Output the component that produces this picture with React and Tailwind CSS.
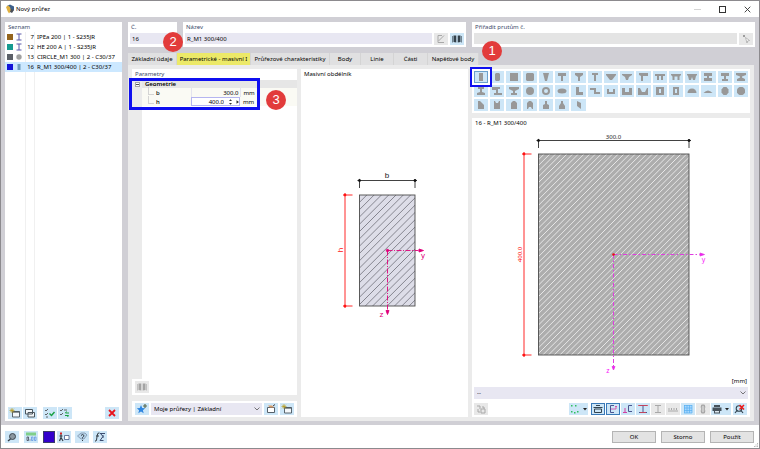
import { useState } from 'react';
import clsx from 'clsx';

const sections = [
  { id: 7, name: 'IPEa 200 | 1 - S235JR', color: 'bg-[#94641c]', shape: 'beam' },
  { id: 12, name: 'HE 200 A | 1 - S235JR', color: 'bg-[#159a90]', shape: 'beam' },
  { id: 13, name: 'CIRCLE_M1 300 | 2 - C30/37', color: 'bg-[#5c6068]', shape: 'circle' },
  { id: 16, name: 'R_M1 300/400 | 2 - C30/37', color: 'bg-[#1414d8]', shape: 'rect' },
];

const tabs = [
  { label: 'Základní údaje', width: 'w-[49px]' },
  { label: 'Parametrické - masivní I', width: 'w-[74px]' },
  { label: 'Průřezové charakteristiky', width: 'w-[79px]' },
  { label: 'Body', width: 'w-[31px]' },
  { label: 'Linie', width: 'w-[33px]' },
  { label: 'Části', width: 'w-[34px]' },
  { label: 'Napěťové body', width: 'w-[51px]' },
];

// Outlines of the parametric sections, drawn in a 14x12 box
const shapes = [
  ['Obdélník', 'M5 2h4v8H5z'],
  ['Zaoblený obdélník', 'M6 2h3l1 1v6l-1 1H6L5 9V3z'],
  ['Čtverec', 'M3 2h8v8H3z'],
  ['Zaoblený čtverec', 'M4 2h6l1 1v6l-1 1H4L3 9V3z'],
  ['Lichoběžník', 'M4 2h6L8 10H6z'],
  ['T', 'M3 2h8v3H8v5H6V5H3z'],
  ['T s náběhem', 'M3 2h8v2L8 6v4H6V6L3 4z'],
  ['T úzké', 'M4 2h6v2H8v6H6V4H4z'],
  ['T lichoběžník', 'M2 3h10v1L8 9H6L2 4z'],
  ['T lichoběžník s náběhem', 'M2 3h10v1L9 6 8 9H6L5 6 2 4z'],
  ['T jednostranné', 'M3 2h9v3H7v5H5V5L3 4z'],
  ['TT', 'M2 3h10v2h-2v4H8V5H6v4H4V5H2z'],
  ['TT s náběhem', 'M2 3h10v1l-1.500 1.500V9h-2V5.500h-3V9h-2V5.500L2 4z'],
  ['TT kónické', 'M2 3h10v1l-1 1-1 4H8L7 6 6 9H4L3 5 2 4z'],
  ['I', 'M3 2h8v3H8v2h3v3H3V7h3V5H3z'],
  ['I úzké', 'M3 2h8v3H8v3h2v2H4V8h2V5H3z'],
  ['I s náběhem', 'M2 2h10v2L8 5.500v1L11 8v2H3V8l3-1.500v-1L2 4z'],
  ['I dole', 'M4 2h6v2H8v3l3 1v2H3V8l3-1V4H4z'],
  ['I jednostranné', 'M2 2h8v2H8v4h4v2H4V8h2V5H2z'],
  ['I nahoře', 'M2 2h10v2L8 6v2h2v2H4V8h2V6L2 4z'],
  ['Kruh', 'M7 2a4 4 0 1 1 0 8a4 4 0 1 1 0-8z'],
  ['Trubka', 'M7 2a4 4 0 1 1 0 8a4 4 0 1 1 0-8zM7 4a2 2 0 1 0 0 4a2 2 0 1 0 0-4z'],
  ['Elipsa', 'M7 3.500a4.500 2.500 0 1 1 0 5a4.500 2.500 0 1 1 0-5z'],
  ['L', 'M4 2h3v5h4v3H4z'],
  ['Z', 'M2 3h6v4h4v2H6V5H2z'],
  ['U nízké', 'M3 4h2v3h4V4h2v5H3z'],
  ['U', 'M2 3h3v4h4V3h3v7H2z'],
  ['U kónické', 'M2 3h2l2 4h3l2-4h1v7H2z'],
  ['Truhlík', 'M3 2h8v8H3zM6 4v4h2V4z'],
  ['Dutý obdélník', 'M4 2h6v8H4zM6 4v4h2V4z'],
  ['Půlkruh', 'M2.500 8a4.500 4.500 0 0 1 9 0z'],
  ['Úseč', 'M2.500 8q4.500-5 9 0z'],
  ['Osmiúhelník', 'M5.500 2h3l2 2.500v3l-2 2.500h-3l-2-2.500v-3z'],
  ['Mnohoúhelník', 'M5.500 2h3L10 3l1 1.500v3L10 9l-1.500 1h-3L4 9 3 7.500v-3L4 3z'],
  ['Zkosený obdélník', 'M4 2h2l4 4v4H4z'],
  ['Vybraný obdélník', 'M4 2h1l1 2h2l1-2h1v8H4z'],
  ['Zaoblený nahoře', 'M5 3l1-1h2l1 1 1 1v6H4V4z'],
  ['Oblouk', 'M4 4l2-2h2l2 2v6H9L8 8H6l-1 2H4z'],
  ['Sloup', 'M6 2h2v3l2 1v4H4V6l2-1z'],
  ['Sloup s náběhem', 'M6 2h2v2l2 3v3H4V7l2-3z'],
  ['Kosodélník', 'M5 2l4 2v6L5 7z'],
];

const blue = 'bg-[#cde6f7]';
const grey = 'bg-[#e8e8e8]';

const IconButton = ({ label, children, tone = blue, className }) => (
  <button
    type="button"
    aria-label={label}
    title={label}
    className={clsx('flex h-3 w-3.5 shrink-0 items-center justify-center', tone, className)}
  >
    <svg viewBox="0 0 14 12" className="h-3 w-3.5" fill="none" aria-hidden="true">
      {children}
    </svg>
  </button>
);

const Callout = ({ children, className }) => (
  <span
    className={clsx(
      'absolute z-20 flex size-5 items-center justify-center rounded-full bg-[#e23b3b] font-["Liberation_Sans",sans-serif] text-[13px] text-white',
      className,
    )}
  >
    {children}
  </span>
);

const Star = () => (
  <path d="M4 1v5M1.500 3.500h5M2.200 1.700l3.600 3.600M5.800 1.700L2.200 5.300" stroke="#b89b1c" strokeWidth=".7" />
);

const NewIcon = () => (
  <>
    <path d="M4.500 4.500h7v5.500h-7z" fill="#f4f8fb" stroke="#4a565e" strokeWidth=".9" />
    <path d="M4.500 5h7" stroke="#4a565e" strokeWidth="1.200" />
    <Star />
  </>
);

const BookIcon = ({ color = '#33414c' }) => (
  <>
    <path d="M3.500 2.500h2.800v7L3.500 9zM10.500 2.500H7.700v7l2.800-.5z" fill={color} />
    <path d="M2.500 3v6.500M11.500 3v6.500" stroke={color} strokeWidth=".6" />
  </>
);

const SectionGlyph = ({ shape }) => (
  <svg viewBox="0 0 8 8" className="size-2 shrink-0" aria-hidden="true">
    {shape === 'beam' && <path d="M1.500 1h5M1.500 7h5M4 1v6" stroke="#5a58a8" fill="none" />}
    {shape === 'circle' && <circle cx="4" cy="4" r="2.700" fill="#a0a0a0" />}
    {shape === 'rect' && <path d="M2.500 1h3v6h-3z" fill="#6f9dbd" />}
  </svg>
);

const SectionList = () => {
  const [selected, setSelected] = useState(16);

  return (
    <aside className="flex w-[117px] shrink-0 flex-col bg-white">
      <h2 className="h-2.5 px-[3px] text-[#3b4a6b]">Seznam</h2>
      <div className="relative flex flex-1 flex-col">
        <div className="absolute inset-y-0 left-5 w-[10px] border-x border-[#f0f0f0]" />
        <ul className="relative">
          {sections.map((s) => (
            <li key={s.id}>
              <button
                type="button"
                onClick={() => setSelected(s.id)}
                className={clsx('flex h-2.5 w-full items-center pl-0.5 text-left', selected === s.id && 'bg-[#cce8ff]')}
              >
                <span className={clsx('mr-0.5 size-1.5 shrink-0', s.color)} />
                <SectionGlyph shape={s.shape} />
                <span className="w-[11px] shrink-0 text-right">{s.id}</span>
                <span className="pl-[3px] whitespace-nowrap">{s.name}</span>
              </button>
            </li>
          ))}
        </ul>
      </div>
      <div className="flex gap-px bg-white px-[3px] py-0.5">
        <IconButton label="Nový"><NewIcon /></IconButton>
        <IconButton label="Kopírovat">
          <path d="M2.500 2.500h7v4.500h-7zM5 5.500h6.500V10H5z" fill="#f4f8fb" stroke="#4a565e" />
        </IconButton>
        <IconButton label="Vybrat vše" className="ml-[5px]">
          <path d="M2 3l1 1 2-2M2 7l1 1 2-2M3 10h2" stroke="#444" strokeWidth=".8" />
          <path d="M6.500 6.500l2 2 3-3.500" stroke="#18a040" strokeWidth="1.400" />
        </IconButton>
        <IconButton label="Obrátit výběr">
          <path d="M2 3l1 1 2-2M2 7l1 1 2-2M6 3h3" stroke="#444" strokeWidth=".8" />
          <path d="M11 6H7.500l1-1.500M7 8.500h3.500l-1 1.500" stroke="#18a040" />
        </IconButton>
        <IconButton label="Smazat" className="ml-auto">
          <path d="M4 3l6 6M10 3L4 9" stroke="#e8141c" strokeWidth="1.800" />
        </IconButton>
      </div>
    </aside>
  );
};

const Branch = () => <span className="-mt-1 h-2 w-1.5 border-b border-l border-[#d4d4d4]" />;

const Parameters = () => (
  <div className="flex min-h-0 flex-1 flex-col bg-white">
    <h2 className="h-[11px] px-[3px] text-[#3b4a6b]">Parametry</h2>
    <div className="relative flex flex-1 flex-col">
      <div className="flex flex-1">
        <div className="w-2.5 shrink-0 bg-[#ebebeb]">
          <button
            type="button"
            aria-label="Sbalit"
            className="mt-0.5 ml-[3px] flex size-[5px] items-center justify-center border border-[#a8a8a8] bg-white"
          >
            <span className="h-px w-[3px] bg-[#555]" />
          </button>
        </div>
        <table className="h-[26px] w-full border-collapse leading-2">
          <tbody>
            <tr className="h-2 bg-[#e6e6e6]">
              <th colSpan={3} className="p-0 pl-[3px] text-left font-semibold">Geometrie</th>
            </tr>
            <tr className="h-[9px] bg-[#fafaf4]">
              <th className="w-[49px] p-0 text-left font-medium">
                <label htmlFor="param-b" className="ml-1.5 flex items-center gap-0.5">
                  <Branch />b
                </label>
              </th>
              <td className="w-[49px] border-x border-[#e4e4ee] p-0">
                <input id="param-b" defaultValue="300.0" className="block h-2 w-full bg-transparent pr-px text-right outline-none" />
              </td>
              <td className="p-0 pl-[3px]">mm</td>
            </tr>
            <tr className="h-[9px] bg-[#fafaf4]">
              <th className="p-0 text-left font-medium">
                <label htmlFor="param-h" className="ml-1.5 flex items-center gap-0.5">
                  <Branch />h
                </label>
              </th>
              <td className="bg-white p-0 ring-1 ring-[#b5b5f0] ring-inset">
                <div className="flex items-center">
                  <input id="param-h" defaultValue="400.0" className="block h-2 w-8 min-w-0 flex-1 bg-transparent text-right outline-none" />
                  <svg viewBox="0 0 16 8" className="h-2 w-4" fill="#333" aria-hidden="true">
                    <path d="M6.500 1.200L8 3H5zM6.500 6.800L5 5h3zM12.500 2.200L15 4l-2.500 1.800z" />
                  </svg>
                </div>
              </td>
              <td className="p-0 pl-[3px]">mm</td>
            </tr>
          </tbody>
        </table>
      </div>
      <div className="pointer-events-none absolute -top-0.5 -left-[3px] h-8 w-[131px] border-3 border-[#0f0ff0]" />
      <Callout className="top-2.5 left-[134px]">3</Callout>
    </div>
    <div className="flex p-0.5 pl-[3px]">
      <IconButton label="Knihovna průřezů" tone={grey}>
        <BookIcon color="#a4a4a4" />
      </IconButton>
    </div>
  </div>
);

// Diagonal hatch lines clipped to a rectangle
const Hatch = ({ id, x, y, width, height, step, fill, stroke, strokeWidth }) => {
  const count = Math.ceil((width + height) / step);
  const d = Array.from({ length: count }, (_, i) => `M${x + i * step} ${y}l${-height} ${height}`).join('');

  return (
    <>
      <clipPath id={id}>
        <rect x={x} y={y} width={width} height={height} />
      </clipPath>
      <rect x={x} y={y} width={width} height={height} fill={fill} />
      <path d={d} clipPath={`url(#${id})`} stroke={stroke} strokeWidth={strokeWidth} />
      <rect x={x} y={y} width={width} height={height} fill="none" stroke="#4c4c4c" strokeWidth=".9" />
    </>
  );
};

const SchemaDrawing = () => (
  <svg viewBox="301 80 167 337" className="min-h-0 w-full flex-1 basis-0" role="img" aria-label="Schéma průřezu">
    <Hatch id="hatch-schema" x={359.5} y={195} width={55.5} height={111} step={7.3} fill="#dddde8" stroke="#85858f" strokeWidth={1} />
    <g stroke="#111" strokeWidth=".8" fill="#111">
      <path d="M357.500 180.500h59.500M359.500 179v9M415 179v9" />
      <circle cx="359.500" cy="180.500" r="1.100" />
      <circle cx="415" cy="180.500" r="1.100" />
    </g>
    <g stroke="#ff1010" strokeWidth=".9" fill="#ff1010">
      <path d="M345 193v115M343 195h9.500M343 306h9.500" />
      <circle cx="345" cy="195" r="1" />
      <circle cx="345" cy="306" r="1" />
    </g>
    <g stroke="#e0007a" strokeWidth=".9" fill="#e0007a">
      <path d="M387.500 250.500h31M387.500 250.500v60" strokeDasharray="5 1.500 1 1.500" />
      <path d="M419 249l4.500 1.500-4.500 1.500zM386 310.500l1.500 4 1.500-4z" />
      <circle cx="387.500" cy="250.500" r="1.200" />
    </g>
    <g className="font-['Liberation_Sans',sans-serif] text-[8px]" textAnchor="middle">
      <text x="387" y="178" fill="#222">b</text>
      <text transform="translate(343 250) rotate(-90)" fill="#ff1010">h</text>
      <text x="423" y="258" fill="#e0007a">y</text>
      <text x="381.500" y="317" fill="#e0007a">z</text>
    </g>
  </svg>
);

const SectionDrawing = () => (
  <svg viewBox="472 129 278 247" className="min-h-0 w-full flex-1 basis-0" role="img" aria-label="Průřez R_M1 300/400">
    <Hatch id="hatch-section" x={538.5} y={154} width={150.5} height={201} step={5.7} fill="#adadad" stroke="#e6e6e6" strokeWidth={1} />
    <g stroke="#111" strokeWidth=".8" fill="#111">
      <path d="M536.500 140.500h154.500M538.500 139v9M689 139v9" />
      <circle cx="538.500" cy="140.500" r="1.100" />
      <circle cx="689" cy="140.500" r="1.100" />
    </g>
    <g stroke="#ff1010" strokeWidth=".9" fill="#ff1010">
      <path d="M524 152v205M522 154h9.500M522 355h9.500" />
      <circle cx="524" cy="154" r="1" />
      <circle cx="524" cy="355" r="1" />
    </g>
    <g stroke="#e03ce0" fill="#f818f8">
      <path d="M613.500 254.500h86M613.500 254.500v112" strokeDasharray="4 2 1.500 2" />
      <path d="M700 253l4.500 1.500-4.500 1.500zM612 366.500l1.500 3.500 1.500-3.500z" strokeWidth=".8" />
    </g>
    <circle cx="613.500" cy="254.500" r="1.300" fill="#e81010" />
    <g className="text-[6px]" textAnchor="middle">
      <text x="613.500" y="139" fill="#222">300.0</text>
      <text transform="translate(522 254.500) rotate(-90)" fill="#ff1010">400.0</text>
    </g>
    <g className="text-[7px]" textAnchor="middle" fill="#f818f8">
      <text x="703.500" y="262">y</text>
      <text x="608" y="373">z</text>
    </g>
  </svg>
);

const Chevron = () => (
  <svg viewBox="0 0 8 6" className="pointer-events-none absolute top-[3px] right-px h-1.5 w-2" fill="none" aria-hidden="true">
    <path d="M1.500 1.500L4 4l2.500-2.500" stroke="#555" strokeWidth=".8" />
  </svg>
);

const Combo = ({ label, value, className }) => (
  <div className={clsx('relative', className)}>
    <select aria-label={label} className="block h-3 w-full appearance-none bg-[#e8e7f2] px-[3px] outline-none">
      <option>{value}</option>
    </select>
    <Chevron />
  </div>
);

const ViewToolbar = () => (
  <div className="flex items-center gap-px pr-px">
    <IconButton label="Výběr" tone={grey}>
      <path d="M3 3h3v3M4 6v3h2M8 4h2v2M7 6h4v4H7z" stroke="#a8a8a8" />
    </IconButton>
    <button type="button" aria-label="Body napětí" className={clsx('ml-auto flex h-3 w-[19px] items-center', blue)}>
      <svg viewBox="0 0 19 12" className="h-3 w-[19px]" aria-hidden="true">
        <path d="M2 2h1.500v1.500H2zM6 2h1.500v1.500H6zM2 8h1.500v1.500H2zM5 9h1.500v1.500H5zM8 8h1.500v1.500H8z" fill="#30c060" />
        <path d="M14 5h4l-2 2.500z" fill="#222" />
      </svg>
    </button>
    <IconButton label="Kóty" className="ml-0.5 ring-1 ring-[#3a7ab8] ring-inset">
      <path d="M3.500 6h7v3.500h-7zM2.500 4.500h9M5 2.500h4" stroke="#334450" />
    </IconButton>
    <IconButton label="Osy" className="ring-1 ring-[#3a7ab8] ring-inset">
      <path d="M8 2.500H4.500v7H8" stroke="#4a5690" />
      <path d="M5 6h5M9 3.500h2M10 3v3" stroke="#d040a0" strokeWidth=".8" />
    </IconButton>
    <IconButton label="Hlavní osy">
      <path d="M11 2.500H7.500v6H11" stroke="#4a5690" />
      <path d="M2 9.500h4M4 7v3M3 6h2" stroke="#d040a0" />
    </IconButton>
    <IconButton label="Rozměry">
      <path d="M3 2.500h8M3 9.500h8M7 3v6" stroke="#4a5690" />
      <path d="M2 2.500h10M4 9.500h6" stroke="#e04050" strokeWidth=".8" />
    </IconButton>
    <IconButton label="Profil" tone={grey}>
      <path d="M4 2.500h6M4 9.500h6M7 3v6" stroke="#a8a8a8" />
    </IconButton>
    <IconButton label="Měřítko" tone={grey}>
      <path d="M2 8h10M3 5v2M5.500 5v2M8 5v2M10.500 5v2" stroke="#a8a8a8" />
    </IconButton>
    <IconButton label="Rastr">
      <path d="M3 2h8v8H3z" fill="#a8d8ff" />
      <path d="M3 2.500h8M3 5h8M3 7.500h8M3 10h8M3.500 2v8M6 2v8M8.500 2v8M11 2v8" stroke="#58b0f0" strokeWidth=".7" />
    </IconButton>
    <IconButton label="Výška" tone={grey}>
      <path d="M5.500 2h3v8h-3zM7 3v6M4.500 4L7 2l2.500 2M4.500 8L7 10l2.500-2" stroke="#a0a0a0" strokeWidth=".8" />
    </IconButton>
    <button type="button" aria-label="Tisk" className={clsx('flex h-3 w-5 items-center', blue)}>
      <svg viewBox="0 0 20 12" className="h-3 w-5" aria-hidden="true">
        <path d="M3 2h6v2H3zM1.500 4.500h9V8h-9zM3 8h6v2.500H3z" fill="#46525c" />
        <path d="M4 8h4v1.500H4z" fill="#dfe9f0" />
        <path d="M14 5h4l-2 2.500z" fill="#222" />
      </svg>
    </button>
    <IconButton label="Zrušit zvětšení" className="ml-px">
      <circle cx="6" cy="5.500" r="2.800" stroke="#334450" strokeWidth="1.100" />
      <path d="M4 7.500l-2 2.500M8 7.500l2 2.500" stroke="#334450" strokeWidth="1.200" />
      <path d="M6.500 2l4.500 4.500M11 2L6.500 6.500" stroke="#f01818" strokeWidth="1.500" />
    </IconButton>
  </div>
);

const Footer = () => (
  <footer className="relative flex h-[23px] shrink-0 items-center gap-1 bg-white px-1">
    <IconButton label="Hledat">
      <circle cx="7.500" cy="5.500" r="3" fill="#8b97a0" stroke="#333c44" strokeWidth=".9" />
      <path d="M5.500 8L3 10" stroke="#333c44" strokeWidth="1.500" />
    </IconButton>
    <IconButton label="Jednotky" className="ml-px">
      <path d="M2 1.500h10v3H2z" fill="#7fcf8a" />
      <path d="M3 6h1.500v3.500H3zM5.500 9h1" stroke="#334" strokeWidth=".7" />
      <path d="M7.500 6h1.500v3.500H7.500zM10.500 6H12v3.500h-1.500z" stroke="#5a8fe0" strokeWidth=".7" />
    </IconButton>
    <div className="ml-px flex gap-0.5">
      <button type="button" aria-label="Barva" className="h-3 w-3 border border-[#3a3a6a] bg-[#3300cc]" />
      <IconButton label="Zobrazení">
        <path d="M3 1.500h2v2H3z" fill="#e02020" />
        <path d="M4 3.500v3L2.500 10M4 6.500L6 10M2.500 5h3" stroke="#333c44" strokeWidth="1.200" />
        <path d="M7.500 4.500H12v4H7.500z" fill="#fff" stroke="#4a5a88" strokeWidth=".8" />
      </IconButton>
    </div>
    <IconButton label="Nápověda">
      <path d="M2.500 5L6 2h4l2 2-3 4H6z" fill="#b8d4ea" stroke="#7288a0" strokeWidth=".7" />
      <path d="M6 4.500q1.500-2 3 0q0 1-1.500 2v1M7.500 9v1" stroke="#333c44" />
    </IconButton>
    <IconButton label="Vzorce">
      <path d="M6.500 2q-2-.5-2.200 2L3.500 9q-.3 1.500-1.500 1M3 5h3" stroke="#333c44" />
      <path d="M7 2.500h5M7.500 2.500L10 5.500 7 9.500h3.500M10 4v3" stroke="#3c4d70" />
    </IconButton>
    <div className="ml-auto flex gap-[5px] pr-px">
      {['OK', 'Storno', 'Použít'].map((label) => (
        <button key={label} type="button" className="h-3 w-11 border border-[#b4b4b4] bg-[#e3e3e3] leading-2">
          {label}
        </button>
      ))}
    </div>
    <svg viewBox="0 0 5 5" className="absolute right-0 bottom-0 size-[5px]" fill="#b8b8b8" aria-hidden="true">
      <path d="M3 0h1v1H3zM1.500 1.500h1v1h-1zM3 1.500h1v1H3zM0 3h1v1H0zM1.500 3h1v1h-1zM3 3h1v1H3z" />
    </svg>
  </footer>
);

const App = () => {
  const [activeTab, setActiveTab] = useState(1);
  const [shape, setShape] = useState(0);

  return (
    <div className="flex min-h-screen flex-col border border-[#8c8a8e] bg-[#d0cfd5] font-['Noto_Sans','Open_Sans',sans-serif] text-[6px] leading-[10px] text-black">
      <header className="flex h-4 shrink-0 items-center bg-white pr-2 pl-1">
        <svg viewBox="0 0 10 10" className="size-2.5" aria-hidden="true">
          <path d="M2 2l3-1.500 4 2V6L6 8 2 5z" fill="#3c5f8c" />
          <path d="M1 3l2-1.500L5 3l1 4-2 2.500L2.500 7z" fill="#e0b040" />
          <path d="M6 5l3 1-2 3-2-1z" fill="#4a4f58" />
        </svg>
        <h1 className="pl-px">Nový průřez</h1>
        <div className="ml-auto flex gap-[18px] text-[#333]">
          <button type="button" aria-label="Minimalizovat" className="flex size-[7px] items-center">
            <span className="h-px w-full bg-[#d4d4d4]" />
          </button>
          <button type="button" aria-label="Maximalizovat" className="size-[7px] border border-[#333]" />
          <button type="button" aria-label="Zavřít" className="size-[7px]">
            <svg viewBox="0 0 7 7" className="size-[7px]" aria-hidden="true">
              <path d="M.7.7l5.600 5.600M6.300.7L.7 6.300" stroke="currentColor" strokeWidth=".9" />
            </svg>
          </button>
        </div>
      </header>

      <main className="flex flex-1 gap-1.5 px-1 pt-[5px] pb-1">
        <SectionList />

        <div className="flex min-w-0 flex-1 flex-col">
          <div className="grid grid-cols-[49fr_283fr_283fr] gap-1.5">
            <div className="relative bg-white px-0.5 pb-[3px]">
              <label htmlFor="section-no" className="block pl-px leading-[11px] text-[#3b4a6b]">Č.</label>
              <input id="section-no" defaultValue="16" className="block h-[11px] w-full bg-[#e8e7f2] px-0.5 outline-none" />
              <Callout className="top-2.5 left-[35px]">2</Callout>
            </div>
            <div className="bg-white px-0.5 pb-0.5">
              <label htmlFor="section-name" className="block pl-px leading-[11px] text-[#3b4a6b]">Název</label>
              <div className="flex gap-0.5">
                <input id="section-name" defaultValue="R_M1 300/400" className="block h-[11px] min-w-0 flex-1 bg-[#e8e7f2] px-0.5 outline-none" />
                <IconButton label="Upravit název" tone={grey}>
                  <path d="M8 2.500H4v7h6M4.500 8L10 2.500" stroke="#a8a8a8" />
                </IconButton>
                <IconButton label="Knihovna"><BookIcon /></IconButton>
              </div>
            </div>
            <div className="relative bg-white px-0.5 pb-0.5">
              <label htmlFor="members" className="block pl-px leading-[11px] text-[#3b4a6b]">Přiřadit prutům č.</label>
              <div className="flex gap-0.5">
                <input id="members" className="block h-[11px] min-w-0 flex-1 bg-[#e4e4e4] px-0.5 outline-none" />
                <IconButton label="Vybrat pruty" tone={grey}>
                  <path d="M4 2l2 2M6 2L4 4" stroke="#888" strokeWidth=".8" />
                  <path d="M6.500 4.500l4 3-2 .5-.5 2z" fill="#fff" stroke="#a0a0a0" strokeWidth=".7" />
                </IconButton>
              </div>
              <Callout className="top-[19px] left-2.5">1</Callout>
            </div>
          </div>

          <div role="tablist" className="mt-1.5 flex h-3">
            {tabs.map((tab, i) => (
              <button
                key={tab.label}
                type="button"
                role="tab"
                aria-selected={activeTab === i}
                onClick={() => setActiveTab(i)}
                className={clsx(
                  'flex items-center justify-center border-r border-[#d4d4d4] whitespace-nowrap',
                  tab.width,
                  activeTab === i ? 'bg-[#ece968]' : 'bg-[#e0e0e1]',
                )}
              >
                {tab.label}
              </button>
            ))}
          </div>

          <div className="mr-px grid flex-1 grid-cols-[165fr_167fr_278fr] gap-1 bg-[#ebebeb] p-1">
            <div className="flex min-w-0 flex-col gap-1.5">
              <Parameters />
              <div className="flex items-center gap-0.5 bg-white px-[3px] py-0.5">
                <IconButton label="Oblíbené">
                  <path d="M6 2l1.200 3 3 .3-2.300 2 .8 3L6 8.600 3.300 10.300l.8-3-2.300-2 3-.3z" fill="#2f86e0" />
                  <path d="M10 1v4M8 3h4" stroke="#5b6b50" strokeWidth="1.200" />
                </IconButton>
                <Combo label="Oblíbené průřezy" value="Moje průřezy | Základní" className="min-w-0 flex-1" />
                <IconButton label="Upravit oblíbené">
                  <path d="M3.500 4.500h7v5h-7z" fill="#fff" stroke="#56616a" />
                  <path d="M4 2.500h4l2 2H6z" fill="#d69a68" />
                  <path d="M9 3l2-1.500" stroke="#444" />
                </IconButton>
                <IconButton label="Nové oblíbené"><NewIcon /></IconButton>
              </div>
            </div>

            <div className="flex min-w-0 flex-col bg-white">
              <h2 className="h-[11px] px-[3px]">Masivní obdélník</h2>
              <SchemaDrawing />
            </div>

            <div className="flex min-w-0 flex-col gap-[5px]">
              <div className="relative grid grid-cols-17 gap-0.5 bg-white p-0.5">
                {shapes.map(([label, d], i) => (
                  <button
                    key={label}
                    type="button"
                    aria-label={label}
                    title={label}
                    onClick={() => setShape(i)}
                    className={clsx('flex h-3 items-center justify-center', blue, shape === i && 'ring-1 ring-[#6aa0cc] ring-inset')}
                  >
                    <svg viewBox="0 0 14 12" className="h-3 w-3.5" aria-hidden="true">
                      <path d={d} fill="#989898" fillRule="evenodd" />
                    </svg>
                  </button>
                ))}
                <div className="pointer-events-none absolute -top-0.5 -left-0.5 h-5 w-[22px] border-2 border-[#0f0ff0]" />
              </div>
              <div className="flex flex-1 flex-col bg-white">
                <h2 className="h-[11px] px-[3px]">16 - R_M1 300/400</h2>
                <SectionDrawing />
                <p className="h-[11px] px-[3px] text-right">[mm]</p>
                <div className="flex flex-col gap-1 px-0.5 pb-0.5">
                  <Combo label="Zobrazení výsledků" value="--" />
                  <ViewToolbar />
                </div>
              </div>
            </div>
          </div>
        </div>
      </main>

      <Footer />
    </div>
  );
};

export default App;
